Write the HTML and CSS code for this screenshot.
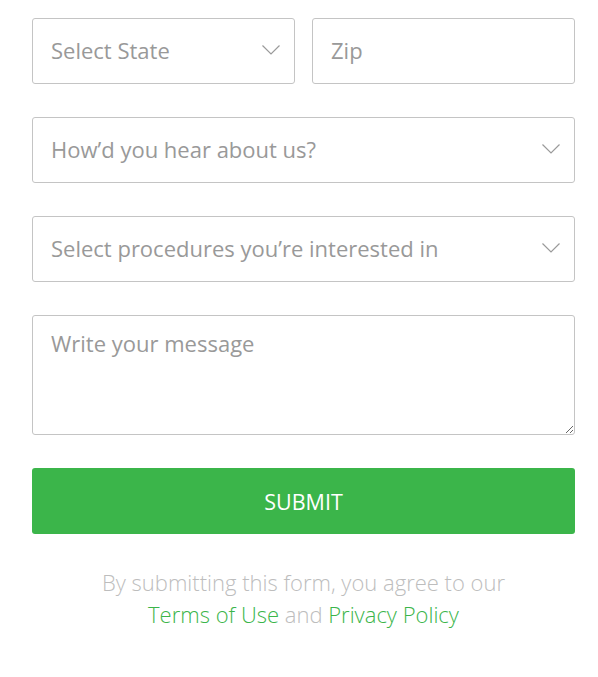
FILE: index.html
```html
<!DOCTYPE html>
<html>
<head>
<meta charset="utf-8">
<link rel="stylesheet" href="styles.css">
</head>
<body>
<form class="form">
  <div class="row">
    <div class="field select"><span class="ph">Select State</span>
      <svg class="chev" width="18" height="10" viewBox="0 0 18 10"><path d="M0.5 0.5 L9 9 L17.5 0.5" fill="none" stroke="#9a9a9a" stroke-width="1.2"/></svg>
    </div>
    <div class="field"><span class="ph">Zip</span></div>
  </div>
  <div class="field select"><span class="ph">How’d you hear about us?</span>
    <svg class="chev" width="18" height="10" viewBox="0 0 18 10"><path d="M0.5 0.5 L9 9 L17.5 0.5" fill="none" stroke="#9a9a9a" stroke-width="1.2"/></svg>
  </div>
  <div class="field select"><span class="ph">Select procedures you’re interested in</span>
    <svg class="chev" width="18" height="10" viewBox="0 0 18 10"><path d="M0.5 0.5 L9 9 L17.5 0.5" fill="none" stroke="#9a9a9a" stroke-width="1.2"/></svg>
  </div>
  <textarea class="message" placeholder="Write your message"></textarea>
  <button type="button" class="submit">SUBMIT</button>
  <p class="note">By submitting this form, you agree to our<br><a href="#">Terms of Use</a> and <a href="#">Privacy Policy</a></p>
</form>
</body>
</html>
```
FILE: styles.css
```css
html, body { margin: 0; padding: 0; background: #fff; }
body { font-family: "Open Sans", sans-serif; }
.form {
  width: 543px;
  margin: 18px 0 0 32px;
  display: flex;
  flex-direction: column;
  gap: 33px;
}
.row { display: flex; gap: 17px; }
.row .field { flex: 1; }
.field {
  box-sizing: border-box;
  height: 66px;
  border: 1px solid #c4c4c4;
  border-radius: 3px;
  padding: 0 18px 2px;
  display: flex;
  align-items: center;
  justify-content: space-between;
  font-size: 22px;
  color: #999;
}
.select .chev { margin-right: -4px; }
.message {
  box-sizing: border-box;
  height: 120px;
  border: 1px solid #c4c4c4;
  border-radius: 3px;
  padding: 12px 18px;
  font-family: "Open Sans", sans-serif;
  font-size: 22px;
  resize: vertical;
  display: block;
  width: 100%;
}
.message::placeholder { color: #999; }
.submit {
  height: 66px;
  border: none;
  border-radius: 3px;
  background: #3bb54a;
  color: #fff;
  font-family: "Open Sans", sans-serif;
  font-size: 21.5px;
  width: 100%;
}
.note {
  margin: -1px 0 0;
  text-align: center;
  font-size: 22px;
  font-weight: 300;
  line-height: 32px;
  color: #bdbdbd;
}
.note a { color: #3bb54a; text-decoration: none; }
```
